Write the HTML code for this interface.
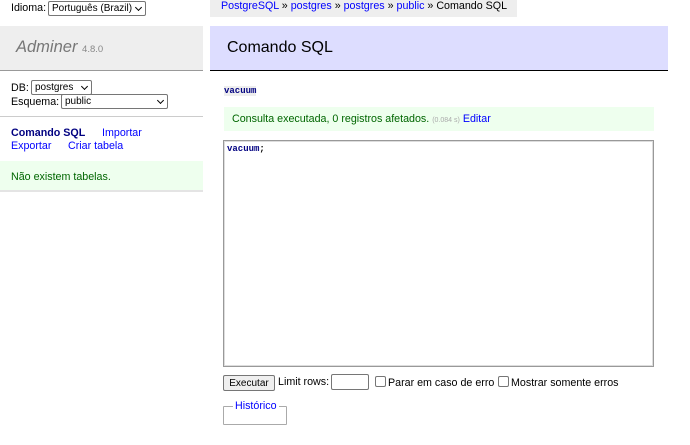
<!DOCTYPE html>
<html><head><meta charset="utf-8"><style>
body{margin:0;width:690px;height:445px;position:relative;font-family:"Liberation Sans",sans-serif;font-size:10.7px;background:#fff;overflow:hidden}
.a{position:absolute;white-space:nowrap}
a{color:#00f;text-decoration:none}
.sel{position:absolute;border:1px solid #767676;border-radius:2px;background:#fff;font-size:10px;height:13px;line-height:13px;padding-left:3px;box-sizing:content-box}
.sel:after{content:"";position:absolute;right:4px;top:3px;width:4px;height:4px;border-right:1.5px solid #000;border-bottom:1.5px solid #000;transform:rotate(45deg)}
.cb{display:inline-block;width:9px;height:9px;border:1px solid #767676;border-radius:2px;vertical-align:-1px;margin-right:2px}
</style></head><body>
<div class="a" style="left:11px;top:2px">Idioma:</div>
<div class="sel" style="left:48px;top:1px;width:93px">Português (Brazil)</div>
<div class="a" style="left:210px;top:0;width:307px;height:17px;background:#eee"></div>
<div class="a" style="left:221px;top:0px"><a href="#">PostgreSQL</a> » <a href="#">postgres</a> » <a href="#">postgres</a> » <a href="#">public</a> » Comando SQL</div>
<div class="a" style="left:0;top:26px;width:203px;height:44px;background:#eee;border-bottom:1px solid #999"></div>
<div class="a" style="left:16px;top:38px;font-size:16.5px;font-style:italic;color:#777">Adminer <span style="font-size:9.5px;font-style:normal;color:#888">4.8.0</span></div>
<div class="a" style="left:11px;top:82px">DB:</div>
<div class="sel" style="left:31px;top:80px;width:56px">postgres</div>
<div class="a" style="left:11px;top:96px">Esquema:</div>
<div class="sel" style="left:61px;top:94px;width:102px">public</div>
<div class="a" style="left:0;top:116px;width:203px;border-top:1px solid #ccc"></div>
<div class="a" style="left:11px;top:127px"><b style="color:#000080">Comando SQL</b></div>
<div class="a" style="left:102px;top:127px"><a href="#">Importar</a></div>
<div class="a" style="left:11px;top:140px"><a href="#">Exportar</a></div>
<div class="a" style="left:68px;top:140px"><a href="#">Criar tabela</a></div>
<div class="a" style="left:0;top:161px;width:203px;height:29px;background:#efe;border-bottom:2px solid #e4e4e4"></div>
<div class="a" style="left:11px;top:171px;color:#060">Não existem tabelas.</div>
<div class="a" style="left:210px;top:26px;width:458px;height:44px;background:#ddf;border-bottom:1px solid #000"></div>
<div class="a" style="left:227px;top:39px;font-size:16px">Comando SQL</div>
<div class="a" style="left:224px;top:86px;font:bold 9px 'Liberation Mono',monospace;color:#000080;background:#eee">vacuum</div>
<div class="a" style="left:224px;top:107px;width:430px;height:24px;background:#efe"></div>
<div class="a" style="left:232px;top:113px;color:#060">Consulta executada, 0 registros afetados. <span style="font-size:7px;color:#aaa">(0.084 s)</span> <a href="#">Editar</a></div>
<div class="a" style="left:223px;top:140px;width:429px;height:225px;border:1px solid #999;box-shadow:inset 0 0 0 1px #ddd"></div>
<div class="a" style="left:227px;top:144px;font:bold 9px 'Liberation Mono',monospace;color:#000080">vacuum<span style="color:#000">;</span></div>
<div class="a" style="left:223px;top:375px;width:50px;height:14px;border:1px solid #767676;border-radius:2px;background:#efefef;font-size:10px;text-align:center;line-height:15px">Executar</div>
<div class="a" style="left:278px;top:376px">Limit rows:</div>
<div class="a" style="left:331px;top:374px;width:36px;height:14px;border:1px solid #767676;border-radius:2px"></div>
<div class="a" style="left:375px;top:376px"><span class="cb"></span>Parar em caso de erro</div>
<div class="a" style="left:498px;top:376px"><span class="cb"></span>Mostrar somente erros</div>
<div class="a" style="left:223px;top:406px;width:62px;height:17px;border:1px solid #aaa;border-radius:1px"></div>
<div class="a" style="left:233px;top:400px;background:#fff;padding:0 2px"><a href="#">Histórico</a></div>
</body></html>
